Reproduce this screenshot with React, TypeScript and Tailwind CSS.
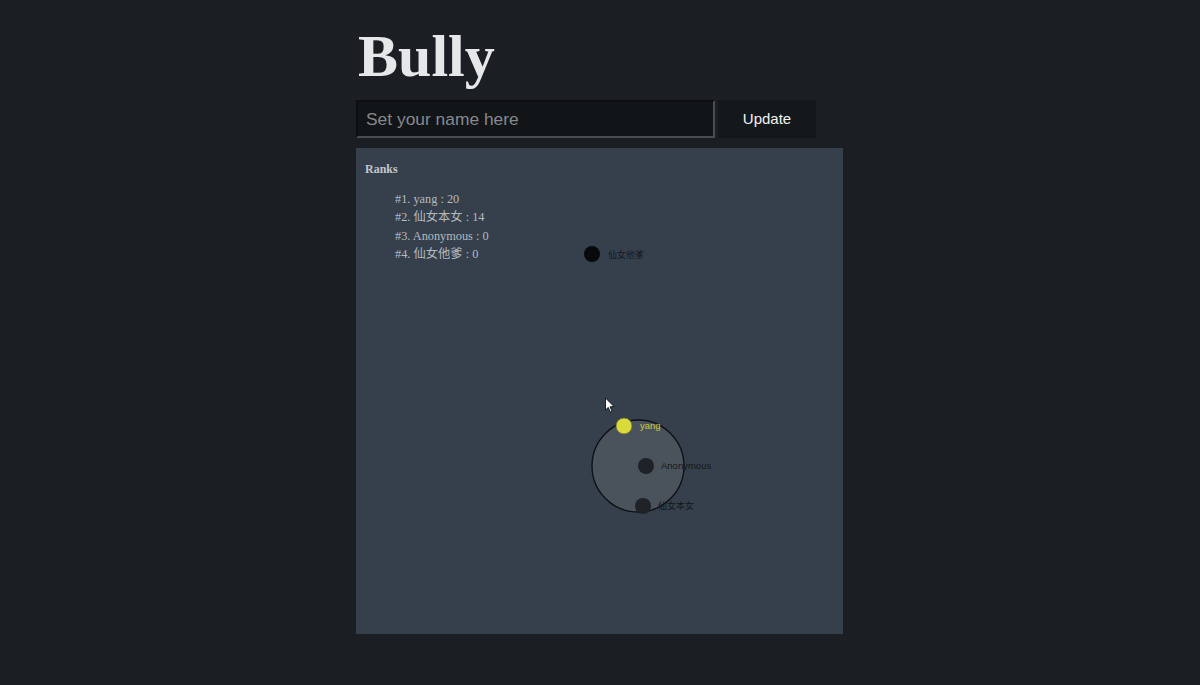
import React from "react";

const serif = "font-['Liberation_Serif','Noto_Sans_CJK_SC',serif]";
const sans = "font-['Liberation_Sans','Noto_Sans_CJK_SC',sans-serif]";

const ranks = ["#1. yang : 20", "#2. 仙女本女 : 14", "#3. Anonymous : 0", "#4. 仙女他爹 : 0"];

export default function App() {
  return (
    <div className="min-h-[685px] w-full bg-[#1b1f24]">
      <div className="w-[487px] pt-[26px] pb-[50px] ml-[356px]">
        <h1 className={`${serif} text-[60px] h-[61px] leading-none font-bold text-[#e6e7e9] pl-[2px]`}>Bully</h1>
        <div className="mt-[13px] flex h-[38px] items-stretch gap-[3px]">
          <input
            className={`${sans} w-[359px] bg-[#121518] border-2 border-t-[#0b0d0f] border-l-[#0b0d0f] border-b-[#4a4e53] border-r-[#4a4e53] px-[8px] text-[17.4px] text-[#ddd] placeholder:text-[#85898d] outline-none`}
            placeholder="Set your name here"
          />
          <button className={`${sans} w-[98px] bg-[#15181b] text-[15px] text-[#f2f2f2]`}>Update</button>
        </div>
        <div className="relative mt-[10px] h-[486px] w-[487px] bg-[#36404c] pt-[12px] pl-[9px]">
          <div className={`${serif} text-[12px] leading-[18px] font-bold text-[#c3c7cc]`}>Ranks</div>
          <ul className={`${serif} mt-[12px] pl-[30px] text-[12.3px] leading-[18.4px] text-[#b4b9bf]`}>
            {ranks.map((r) => (
              <li key={r}>{r}</li>
            ))}
          </ul>
          <svg className="absolute left-0 top-0" width="487" height="486" viewBox="0 0 487 486">
            <circle cx="236" cy="106" r="8" fill="#08090b" />
            <text x="252" y="110" fontSize="9" fill="#15171a" fontFamily="'Liberation Sans','Noto Sans CJK SC',sans-serif">仙女他爹</text>

            <circle cx="282" cy="318" r="46" fill="#4a525c" stroke="#0d0f12" strokeWidth="1.3" />

            <circle cx="268" cy="278" r="8" fill="#dada3c" stroke="#6b6b30" strokeWidth="0.8" />
            <text x="284" y="281" fontSize="9.5" fill="#c9c83e" fontFamily="'Liberation Sans',sans-serif">yang</text>

            <circle cx="290" cy="318" r="8" fill="#1f2227" />
            <text x="305" y="321" fontSize="9.5" fill="#15171a" fontFamily="'Liberation Sans',sans-serif">Anonymous</text>

            <circle cx="287" cy="358" r="8" fill="#1f2227" />
            <text x="302" y="361" fontSize="9" fill="#15171a" fontFamily="'Liberation Sans','Noto Sans CJK SC',sans-serif">仙女本女</text>

            <path d="M249.5 250 L249.5 262 L252.3 259.4 L254.3 264 L256 263.2 L254.1 258.8 L258 258.6 Z" fill="#ffffff" stroke="#000" strokeWidth="0.8" strokeLinejoin="round" />
          </svg>
        </div>
      </div>
    </div>
  );
}
